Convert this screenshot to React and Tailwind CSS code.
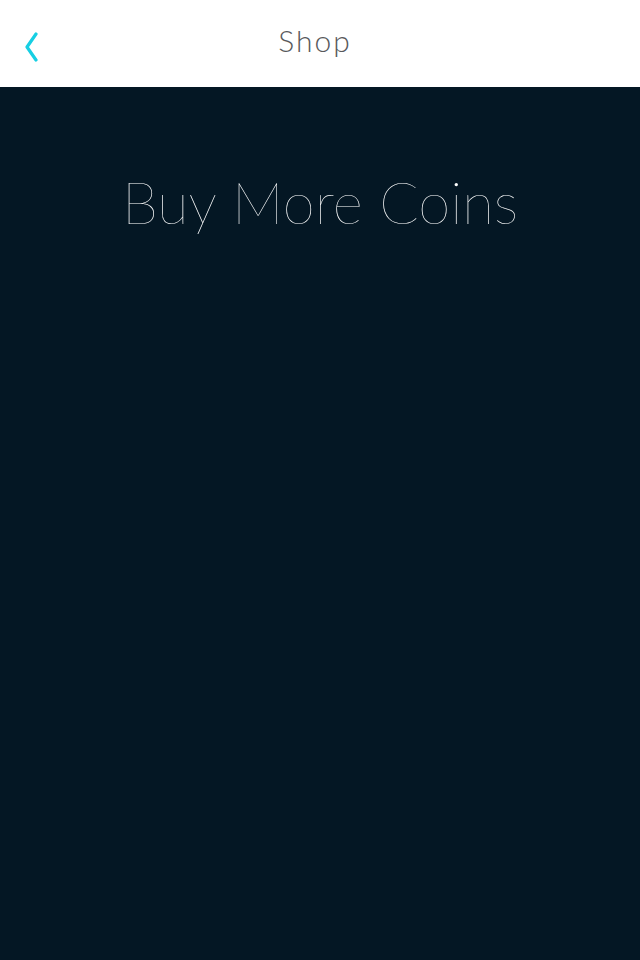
import React from 'react';

const App = () => {
    return (
        <div className="w-[640px] h-[960px] flex flex-col bg-[#041724]" style={{ fontFamily: 'Lato, "Open Sans", sans-serif' }}>
            {/* Nav bar */}
            <div className="h-[87px] bg-white flex items-center relative shrink-0">
                <button className="absolute left-[17px] top-[30px] w-[26px] h-[34px] flex items-center justify-center">
                    <svg width="16" height="32" viewBox="0 0 16 32" fill="none">
                        <path d="M14 3 L5 16 L14 29" stroke="#17cfe3" strokeWidth="3.2" strokeLinecap="round" strokeLinejoin="round" />
                    </svg>
                </button>
                <h1 className="w-full text-center pr-[10px] text-[30px] font-light text-[#58595b] tracking-[2px] leading-none -mt-[8px]">Shop</h1>
            </div>

            {/* Content */}
            <div className="flex-1 flex flex-col items-center pt-[86px]">
                <h2 className="text-[58px] font-thin text-white leading-none tracking-[0px]">Buy More Coins</h2>
            </div>
        </div>
    );
};

export default App;
